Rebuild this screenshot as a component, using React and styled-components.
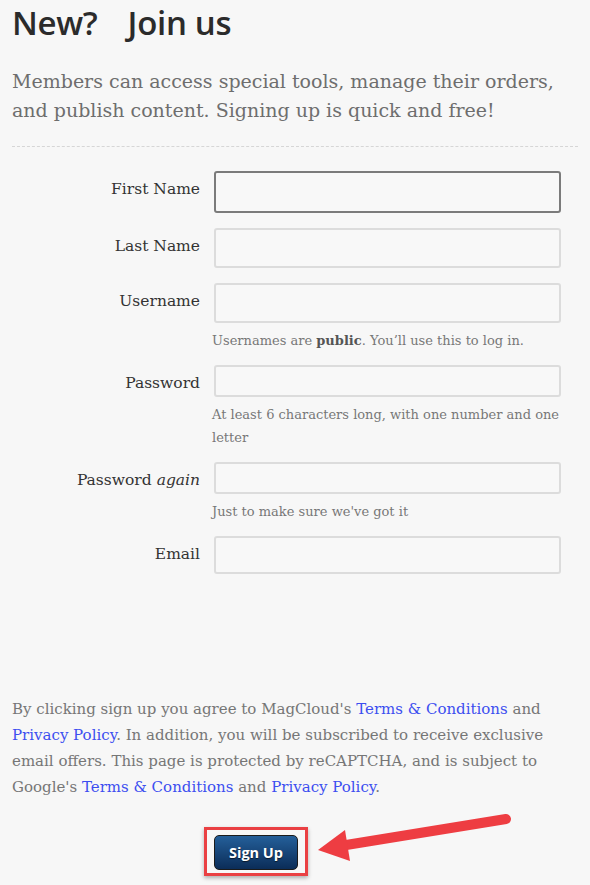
import styled, { createGlobalStyle } from "styled-components";

const GlobalStyle = createGlobalStyle`
  html, body {
    margin: 0;
    padding: 0;
    background: #f7f7f7;
  }
  * {
    box-sizing: border-box;
  }
`;

const fields = [
  { id: "first", label: "First Name", type: "text", height: 42, focused: true },
  { id: "last", label: "Last Name", type: "text", height: 40 },
  {
    id: "user",
    label: "Username",
    type: "text",
    height: 40,
    hint: (
      <>
        Usernames are <b>public</b>. You’ll use this to log in.
      </>
    ),
  },
  {
    id: "pass",
    label: "Password",
    type: "password",
    height: 32,
    hint: "At least 6 characters long, with one number and one letter",
  },
  {
    id: "pass2",
    label: (
      <>
        Password <i>again</i>
      </>
    ),
    type: "password",
    height: 32,
    hint: "Just to make sure we've got it",
  },
  { id: "email", label: "Email", type: "email", height: 38 },
];

const App = () => {
  return (
    <Page>
      <GlobalStyle />
      <Heading>
        <span>New?</span>
        <span>Join us</span>
      </Heading>

      <Intro>
        Members can access special tools, manage their orders, and publish
        content. Signing up is quick and free!
      </Intro>

      <Divider />

      <Form onSubmit={(e) => e.preventDefault()}>
        {fields.map((f) => (
          <Row key={f.id} $hasHint={!!f.hint}>
            <Label htmlFor={f.id}>{f.label}</Label>
            <Field>
              <Input id={f.id} type={f.type} $h={f.height} $focused={f.focused} />
              {f.hint && <Hint>{f.hint}</Hint>}
            </Field>
          </Row>
        ))}
      </Form>

      <Legal>
        By clicking sign up you agree to MagCloud's{" "}
        <a href="#">Terms &amp; Conditions</a> and{" "}
        <a href="#">Privacy Policy</a>. In addition, you will be subscribed to
        receive exclusive email offers. This page is protected by reCAPTCHA,
        and is subject to Google's <a href="#">Terms &amp; Conditions</a> and{" "}
        <a href="#">Privacy Policy</a>.
      </Legal>

      <Actions>
        <Highlight>
          <SignUp type="submit">Sign Up</SignUp>
        </Highlight>
        <Arrow width="205" height="60" viewBox="0 0 205 60">
          <line
            x1="28"
            y1="35"
            x2="194"
            y2="8"
            stroke="#ee3d42"
            strokeWidth="10"
            strokeLinecap="round"
          />
          <polygon points="6,39 33,19 38,50" fill="#ee3d42" />
        </Arrow>
      </Actions>
    </Page>
  );
};

export default App;

const Page = styled.div`
  position: relative;
  width: 590px;
  min-height: 885px;
  padding: 0 12px;
  font-family: "DejaVu Serif", Georgia, serif;
  color: #333;
`;

const Heading = styled.h1`
  margin: 0;
  padding-top: 1px;
  display: flex;
  gap: 30px;
  font-family: "Open Sans", sans-serif;
  font-weight: 600;
  font-size: 33px;
  line-height: 44px;
  color: #2b2b2b;
  letter-spacing: -0.3px;
`;

const Intro = styled.p`
  margin: 22px 0 0;
  font-size: 19px;
  line-height: 29px;
  color: #6e6e6e;
`;

const Divider = styled.hr`
  margin: 21px 0 0;
  border: 0;
  border-top: 1px dashed #d6d6d6;
`;

const Form = styled.form`
  margin-top: 24px;
  display: flex;
  flex-direction: column;
`;

const Row = styled.div`
  display: grid;
  grid-template-columns: 188px 347px;
  column-gap: 14px;
  align-items: start;
  margin-bottom: ${(p) => (p.$hasHint ? "13px" : "15px")};
`;

const Label = styled.label`
  text-align: right;
  font-size: 15.5px;
  line-height: 20px;
  padding-top: 8px;
  color: #333;

  i {
    font-style: italic;
  }
`;

const Field = styled.div`
  display: flex;
  flex-direction: column;
`;

const Input = styled.input`
  width: 347px;
  height: ${(p) => p.$h}px;
  border: 2px solid ${(p) => (p.$focused ? "#7b7b7b" : "#dcdcdc")};
  border-radius: 3px;
  background: #f8f8f8;
  outline: none;
`;

const Hint = styled.div`
  margin-top: 6px;
  margin-left: -2px;
  font-size: 13px;
  line-height: 23px;
  color: #777;

  b {
    color: #555;
  }
`;

const Legal = styled.p`
  margin: 107px 0 0;
  font-size: 15px;
  line-height: 26px;
  color: #767676;

  a {
    color: #3c4ef0;
    text-decoration: none;
  }
`;

const Actions = styled.div`
  position: relative;
  margin-top: 27px;
  padding-left: 192px;
`;

const Highlight = styled.span`
  display: inline-block;
  padding: 5px 7px 3px;
  border: 3px solid #ea4043;
  box-shadow: 0 2px 4px rgba(0, 0, 0, 0.3);
`;

const SignUp = styled.button`
  display: block;
  width: 84px;
  height: 35px;
  border: 1px solid #1b1b1b;
  border-radius: 5px;
  background: linear-gradient(#245f9a, #0b2d58);
  color: #fff;
  font-family: "Open Sans", sans-serif;
  font-weight: 700;
  font-size: 14.5px;
  text-shadow: 0 1px 1px rgba(0, 0, 0, 0.6);
  cursor: pointer;
`;

const Arrow = styled.svg`
  position: absolute;
  left: 300px;
  top: -16px;
`;
